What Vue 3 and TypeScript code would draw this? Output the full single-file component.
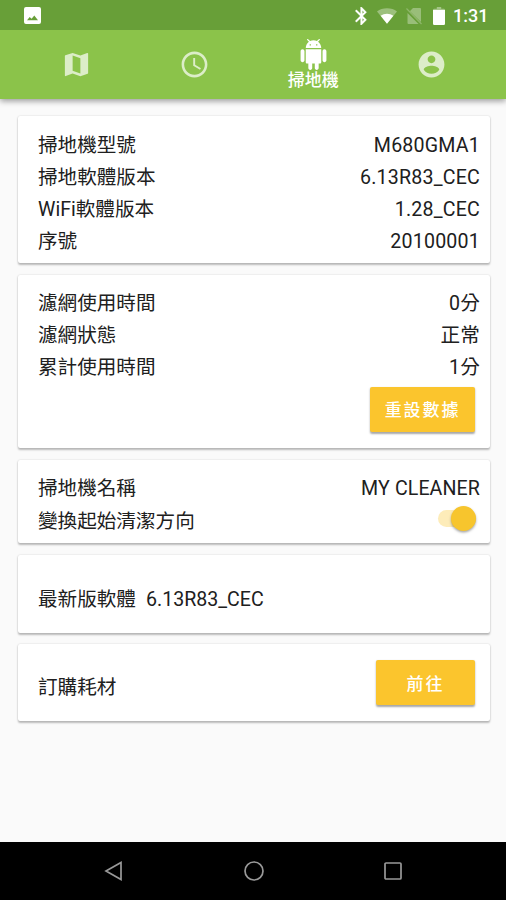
<script setup lang="ts">
import { ref } from 'vue'

interface InfoRow {
  label: string
  value: string
}

const deviceRows: InfoRow[] = [
  { label: '掃地機型號', value: 'M680GMA1' },
  { label: '掃地軟體版本', value: '6.13R83_CEC' },
  { label: 'WiFi軟體版本', value: '1.28_CEC' },
  { label: '序號', value: '20100001' },
]

const usageRows: InfoRow[] = [
  { label: '濾網使用時間', value: '0分' },
  { label: '濾網狀態', value: '正常' },
  { label: '累計使用時間', value: '1分' },
]

const reversed = ref<boolean>(true)
</script>

<template>
  <div class="screen">
    <header class="top">
      <div class="status">
        <svg class="picture" viewBox="0 0 17 17">
          <path fill-rule="evenodd" d="M2 0h13a2 2 0 0 1 2 2v13a2 2 0 0 1-2 2H2a2 2 0 0 1-2-2V2a2 2 0 0 1 2-2zM3 13.300h11L10.300 8.500 7.600 11.700 5.700 10z" />
        </svg>
        <span class="spacer"></span>
        <svg class="bluetooth" viewBox="5 2 14 20">
          <path d="M17.710 7.710L12 2h-1v7.590L6.410 5 5 6.410 10.590 12 5 17.590 6.410 19 11 14.410V22h1l5.710-5.710-4.300-4.290 4.300-4.290zM13 5.830l1.880 1.880L13 9.590V5.830zm1.880 10.460L13 18.170v-3.760l1.880 1.880z" />
        </svg>
        <svg class="wifi" viewBox="0 0 22 17">
          <path opacity=".35" d="M11 17L0 3.500C3 1.200 6.800 0 11 0s8 1.200 11 3.500z" />
          <path d="M11 17L4 8.300C6 6.800 8.400 6 11 6s5 .8 7 2.300z" />
        </svg>
        <svg class="nosim" viewBox="0 0 16 18">
          <path opacity=".33" d="M7 1h7a1 1 0 0 1 1 1v13L3.800 4.200zM1.500 6l11 11H2.500a1 1 0 0 1-1-1z" />
          <path class="slash" d="M.5 1.500L15.500 17" />
        </svg>
        <svg class="battery" viewBox="0 0 12 18">
          <path opacity=".4" d="M3.800 0h4.400v1.800h2.600A1.200 1.200 0 0 1 12 3H0a1.200 1.200 0 0 1 1.200-1.200h2.600z" />
          <path d="M0 3h12v13.800a1.200 1.200 0 0 1-1.200 1.200H1.200A1.200 1.200 0 0 1 0 16.800z" />
        </svg>
        <span class="time">1:31</span>
      </div>
      <nav class="tabs">
        <button class="tab">
          <svg viewBox="0 0 24 24"><path d="M20.500 3l-.16.03L15 5.100 9 3 3.360 4.900c-.21.07-.36.25-.36.48V20.500c0 .28.22.5.5.5l.16-.03L9 18.900l6 2.100 5.640-1.900c.21-.07.36-.25.36-.48V3.500c0-.28-.22-.5-.5-.5zM15 19l-6-2.110V5l6 2.110V19z" /></svg>
        </button>
        <button class="tab">
          <svg viewBox="0 0 24 24"><path d="M11.990 2C6.470 2 2 6.480 2 12s4.470 10 9.990 10C17.520 22 22 17.520 22 12S17.520 2 11.990 2zM12 20c-4.420 0-8-3.580-8-8s3.580-8 8-8 8 3.580 8 8-3.580 8-8 8zm.5-13H11v6l5.250 3.150.75-1.230-4.500-2.670z" /></svg>
        </button>
        <button class="tab active">
          <svg viewBox="0 0 24 24"><path d="M6 18c0 .55.45 1 1 1h1v3.500c0 .83.67 1.500 1.500 1.500s1.500-.67 1.500-1.500V19h2v3.500c0 .83.67 1.500 1.500 1.500s1.500-.67 1.500-1.500V19h1c.55 0 1-.45 1-1V8H6v10zM3.500 8C2.670 8 2 8.670 2 9.500v7c0 .83.67 1.500 1.500 1.500S5 17.330 5 16.500v-7C5 8.670 4.330 8 3.500 8zm17 0c-.83 0-1.500.67-1.500 1.500v7c0 .83.67 1.500 1.500 1.500s1.500-.67 1.500-1.500v-7c0-.83-.67-1.500-1.500-1.500zm-4.970-5.840l1.300-1.300c.2-.2.2-.51 0-.71-.2-.2-.51-.2-.71 0l-1.480 1.480C13.850 1.230 12.950 1 12 1c-.96 0-1.860.23-2.660.63L7.850.15c-.2-.2-.51-.2-.71 0-.2.2-.2.51 0 .71l1.310 1.310C6.970 3.260 6 5.010 6 7h12c0-1.990-.97-3.750-2.470-4.840zM10 5H9V4h1v1zm5 0h-1V4h1v1z" /></svg>
          <span>掃地機</span>
        </button>
        <button class="tab">
          <svg viewBox="0 0 24 24"><path d="M12 2C6.480 2 2 6.480 2 12s4.480 10 10 10 10-4.480 10-10S17.520 2 12 2zm0 3c1.660 0 3 1.340 3 3s-1.340 3-3 3-3-1.340-3-3 1.340-3 3-3zm0 14.200c-2.500 0-4.710-1.280-6-3.220.03-1.990 4-3.080 6-3.080 1.990 0 5.970 1.090 6 3.080-1.290 1.940-3.500 3.220-6 3.220z" /></svg>
        </button>
      </nav>
    </header>

    <main class="content">
      <section class="card device">
        <div v-for="row in deviceRows" :key="row.label" class="row">
          <span>{{ row.label }}</span><span class="value">{{ row.value }}</span>
        </div>
      </section>

      <section class="card usage">
        <div v-for="row in usageRows" :key="row.label" class="row">
          <span>{{ row.label }}</span><span class="value">{{ row.value }}</span>
        </div>
        <button class="action reset">重設數據</button>
      </section>

      <section class="card naming">
        <div class="row">
          <span>掃地機名稱</span><span class="name">MY CLEANER</span>
        </div>
        <div class="row direction">
          <span>變換起始清潔方向</span>
          <button class="switch" :class="{ on: reversed }" role="switch" :aria-checked="reversed" @click="reversed = !reversed">
            <span class="thumb"></span>
          </button>
        </div>
      </section>

      <section class="card single firmware">
        <span>最新版軟體</span><span>6.13R83_CEC</span>
      </section>

      <section class="card single order">
        <span>訂購耗材</span>
        <button class="action go">前往</button>
      </section>
    </main>

    <footer class="navbar">
      <svg viewBox="0 0 20 20"><path d="M17 1.500v17L2 10z" /></svg>
      <svg viewBox="0 0 20 20"><circle cx="10" cy="10" r="9" /></svg>
      <svg viewBox="0 0 20 20"><rect x="2" y="2" width="16" height="16" rx="1" /></svg>
    </footer>
  </div>
</template>

<style>
body {
  margin: 0;
}
</style>

<style scoped>
.screen {
  display: flex;
  flex-direction: column;
  width: 506px;
  height: 900px;
  overflow: hidden;
  background: #fafafa;
  color: #202020;
  font-family: Roboto, 'Noto Sans CJK TC', sans-serif;
  font-size: 19.6px;
}

button {
  border: 0;
  padding: 0;
  font-family: inherit;
}

.top {
  height: 99px;
  background: #8bc34a;
  box-shadow: 0 2px 6px rgba(0, 0, 0, 0.4);
}

.status {
  display: flex;
  align-items: center;
  box-sizing: border-box;
  height: 30px;
  padding: 1px 19px 0 24px;
  background: #689f38;
  fill: #fff;
}

.picture {
  width: 17px;
  height: 17px;
}

.spacer {
  flex: 1;
}

.bluetooth {
  width: 13px;
  height: 18px;
  margin-right: 9px;
  stroke: #fff;
  stroke-width: 0.3;
}

.wifi {
  width: 20px;
  height: 16px;
  margin-right: 9px;
}

.nosim {
  width: 16px;
  height: 18px;
  margin-right: 11px;
}

.slash {
  fill: none;
  stroke: #8fb76b;
  stroke-width: 1.2;
}

.battery {
  width: 12px;
  height: 18px;
  margin-right: 8px;
}

.time {
  width: 34px;
  color: #fff;
  font-size: 18px;
  font-weight: 500;
  line-height: 30px;
  white-space: nowrap;
}

.tabs {
  display: flex;
  height: 69px;
  padding: 0 15px 0 17px;
}

.tab {
  display: flex;
  flex: 1;
  flex-direction: column;
  align-items: center;
  justify-content: center;
  background: none;
  color: #fff;
  fill: #dcedc8;
}

.tab svg {
  flex: none;
  width: 31px;
  height: 31px;
}

.tab.active {
  fill: #fff;
}

.tab.active span {
  font-size: 17px;
  font-weight: 500;
  line-height: 20px;
}

.content {
  display: flex;
  flex: 1;
  flex-direction: column;
  gap: 12px;
  padding: 17px 16px 0 18px;
}

.card {
  box-sizing: border-box;
  padding: 0 10px 0 20px;
  border-radius: 2px;
  background: #fff;
  box-shadow: 0 1.5px 2px rgba(0, 0, 0, 0.25), 0 0 2px rgba(0, 0, 0, 0.12);
}

.row {
  display: flex;
  align-items: center;
  justify-content: space-between;
  height: 32px;
  line-height: 32px;
  white-space: nowrap;
}

.value {
  letter-spacing: 0.2px;
}

.name {
  letter-spacing: 0.1px;
}

.device {
  height: 147px;
  padding-top: 14px;
}

.usage {
  display: flex;
  flex-direction: column;
  height: 173px;
  padding-top: 13px;
}

.naming {
  height: 83px;
  padding-top: 13px;
}

.direction {
  height: 34px;
}

.single {
  display: flex;
  align-items: center;
  height: 78px;
}

.firmware {
  align-items: baseline;
  gap: 10px;
  padding-top: 28px;
}

.order {
  justify-content: space-between;
  height: 77px;
  margin-top: -1px;
}

.order span {
  padding-top: 5px;
}

.action {
  height: 45px;
  border-radius: 2px;
  background: #fbc52d;
  color: #fff;
  font-size: 17px;
  font-weight: 500;
  letter-spacing: 1.9px;
  box-shadow: 0 1.5px 2px rgba(0, 0, 0, 0.35);
}

.reset {
  align-self: flex-end;
  width: 105px;
  padding-bottom: 2px;
  margin: 3px 5px 0 0;
}

.go {
  width: 99px;
  margin-right: 5px;
  padding-bottom: 1px;
}

.switch {
  display: flex;
  align-items: center;
  width: 38px;
  height: 17px;
  margin: -8px 4px 0 0;
  border-radius: 9px;
  background: #ccc;
}

.thumb {
  width: 25px;
  height: 25px;
  border-radius: 50%;
  background: #fafafa;
  box-shadow: 0 1.5px 2.5px rgba(0, 0, 0, 0.35);
}

.switch.on {
  justify-content: flex-end;
  background: #fdecb9;
}

.switch.on .thumb {
  background: #f7c52d;
}

.navbar {
  display: flex;
  align-items: center;
  justify-content: space-between;
  height: 58px;
  box-sizing: border-box;
  padding: 0 103px 0 104px;
  background: #000;
}

.navbar svg {
  width: 20px;
  height: 20px;
  fill: none;
  stroke: #999;
  stroke-width: 1.7;
}
</style>
